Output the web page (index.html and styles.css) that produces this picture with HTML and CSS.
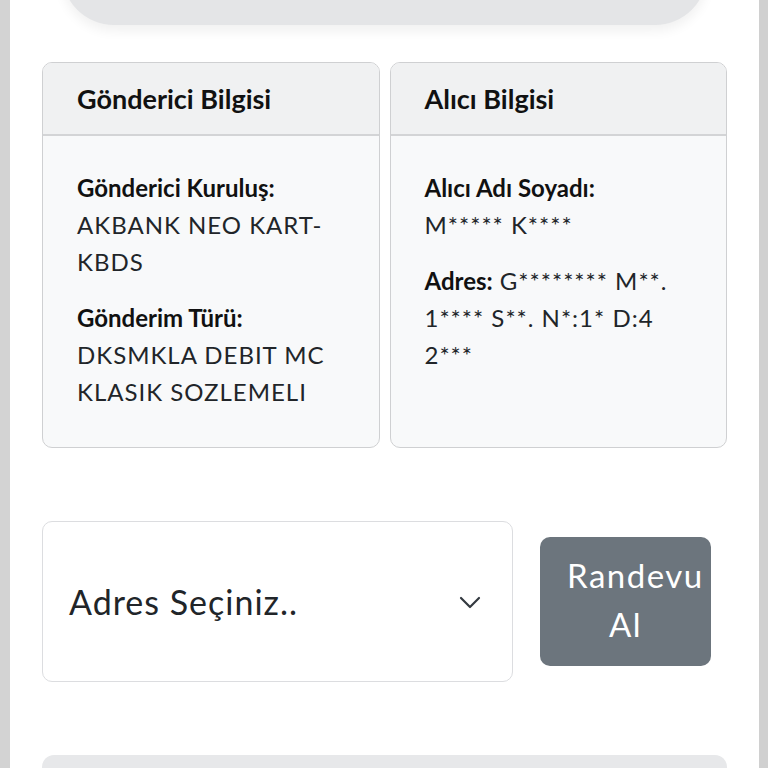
FILE: index.html
```html
<!DOCTYPE html>
<html lang="tr">
<head>
<meta charset="utf-8">
<title>Gönderi</title>
<link rel="stylesheet" href="styles.css">
</head>
<body>
<div class="frame">
  <div class="top-pill"></div>
  <div class="cards">
    <div class="card">
      <div class="card-header">Gönderici Bilgisi</div>
      <div class="card-body">
        <p><strong>Gönderici Kuruluş:</strong><br>AKBANK NEO KART-<br>KBDS</p>
        <p><strong>Gönderim Türü:</strong><br>DKSMKLA DEBIT MC<br>KLASIK SOZLEMELI</p>
      </div>
    </div>
    <div class="card">
      <div class="card-header">Alıcı Bilgisi</div>
      <div class="card-body">
        <p><strong>Alıcı Adı Soyadı:</strong><br>M***** K****</p>
        <p><strong>Adres:</strong> G******** M**.<br>1**** S**. N*:1* D:4<br>2***</p>
      </div>
    </div>
  </div>
  <div class="action-row">
    <div class="select">
      <span class="select-text">Adres Seçiniz..</span>
      <svg class="chevron" width="24" height="14" viewBox="0 0 24 14"><path d="M3 3 L12 12 L21 3" fill="none" stroke="#343a40" stroke-width="2.2" stroke-linecap="round" stroke-linejoin="round"/></svg>
    </div>
    <button class="btn">Randevu<br>Al</button>
  </div>
  <div class="bottom-card"></div>
</div>
</body>
</html>
```
FILE: styles.css
```css
html, body {
  margin: 0;
  padding: 0;
  background: #fff;
  overflow: hidden;
}
body {
  font-family: "Lato", "Open Sans", sans-serif;
  color: #212529;
}
.frame {
  height: 768px;
  box-sizing: border-box;
  border-left: 10px solid #d3d3d3;
  border-right: 9px solid #d0d0d0;
  background: #fff;
  overflow: hidden;
}
.top-pill {
  height: 80px;
  margin: -55px 52px 0 52px;
  background: #e4e5e7;
  border-radius: 0 0 52px 52px;
  box-shadow: 0 6px 12px rgba(0,0,0,0.06);
}
.cards {
  display: flex;
  gap: 10px;
  margin: 37px 32px 0 32px;
}
.card {
  flex: 1;
  border: 1px solid #cfd0d2;
  border-radius: 10px;
  background: #f8f9fa;
  overflow: hidden;
  height: 386px;
  box-sizing: border-box;
}
.card-header {
  height: 73px;
  box-sizing: border-box;
  border-bottom: 2px solid #d3d4d6;
  background: #f0f1f2;
  padding: 0 34px;
  display: flex;
  align-items: center;
  font-size: 27px;
  font-weight: 700;
  color: #111;
}
.card-body {
  padding: 33px 34px 0 34px;
  font-size: 24px;
  line-height: 37px;
  letter-spacing: 1px;
}
.card-body p {
  margin: 0 0 19px 0;
  white-space: nowrap;
}
.card-body strong {
  font-weight: 700;
  color: #111;
  letter-spacing: 0;
}
.action-row {
  display: flex;
  align-items: center;
  gap: 27px;
  margin: 73px 32px 0 32px;
}
.select {
  width: 471px;
  height: 161px;
  box-sizing: border-box;
  border: 1px solid #dcdde0;
  border-radius: 10px;
  background: #fff;
  display: flex;
  align-items: center;
  justify-content: space-between;
  padding: 0 30px 0 26px;
}
.select-text {
  font-size: 34px;
  letter-spacing: 1px;
  color: #212529;
}
.chevron {
  display: block;
}
.btn {
  width: 171px;
  height: 129px;
  box-sizing: border-box;
  border: none;
  border-radius: 10px;
  background: #6c757d;
  color: #fff;
  font-family: "Lato", "Open Sans", sans-serif;
  font-size: 33px;
  letter-spacing: 1.5px;
  line-height: 49px;
  padding: 0 27px 4px 27px;
  text-align: center;
}
.bottom-card {
  margin: 73px 32px 0 32px;
  height: 60px;
  background: #e7e8ea;
  border-radius: 12px 12px 0 0;
}
```
